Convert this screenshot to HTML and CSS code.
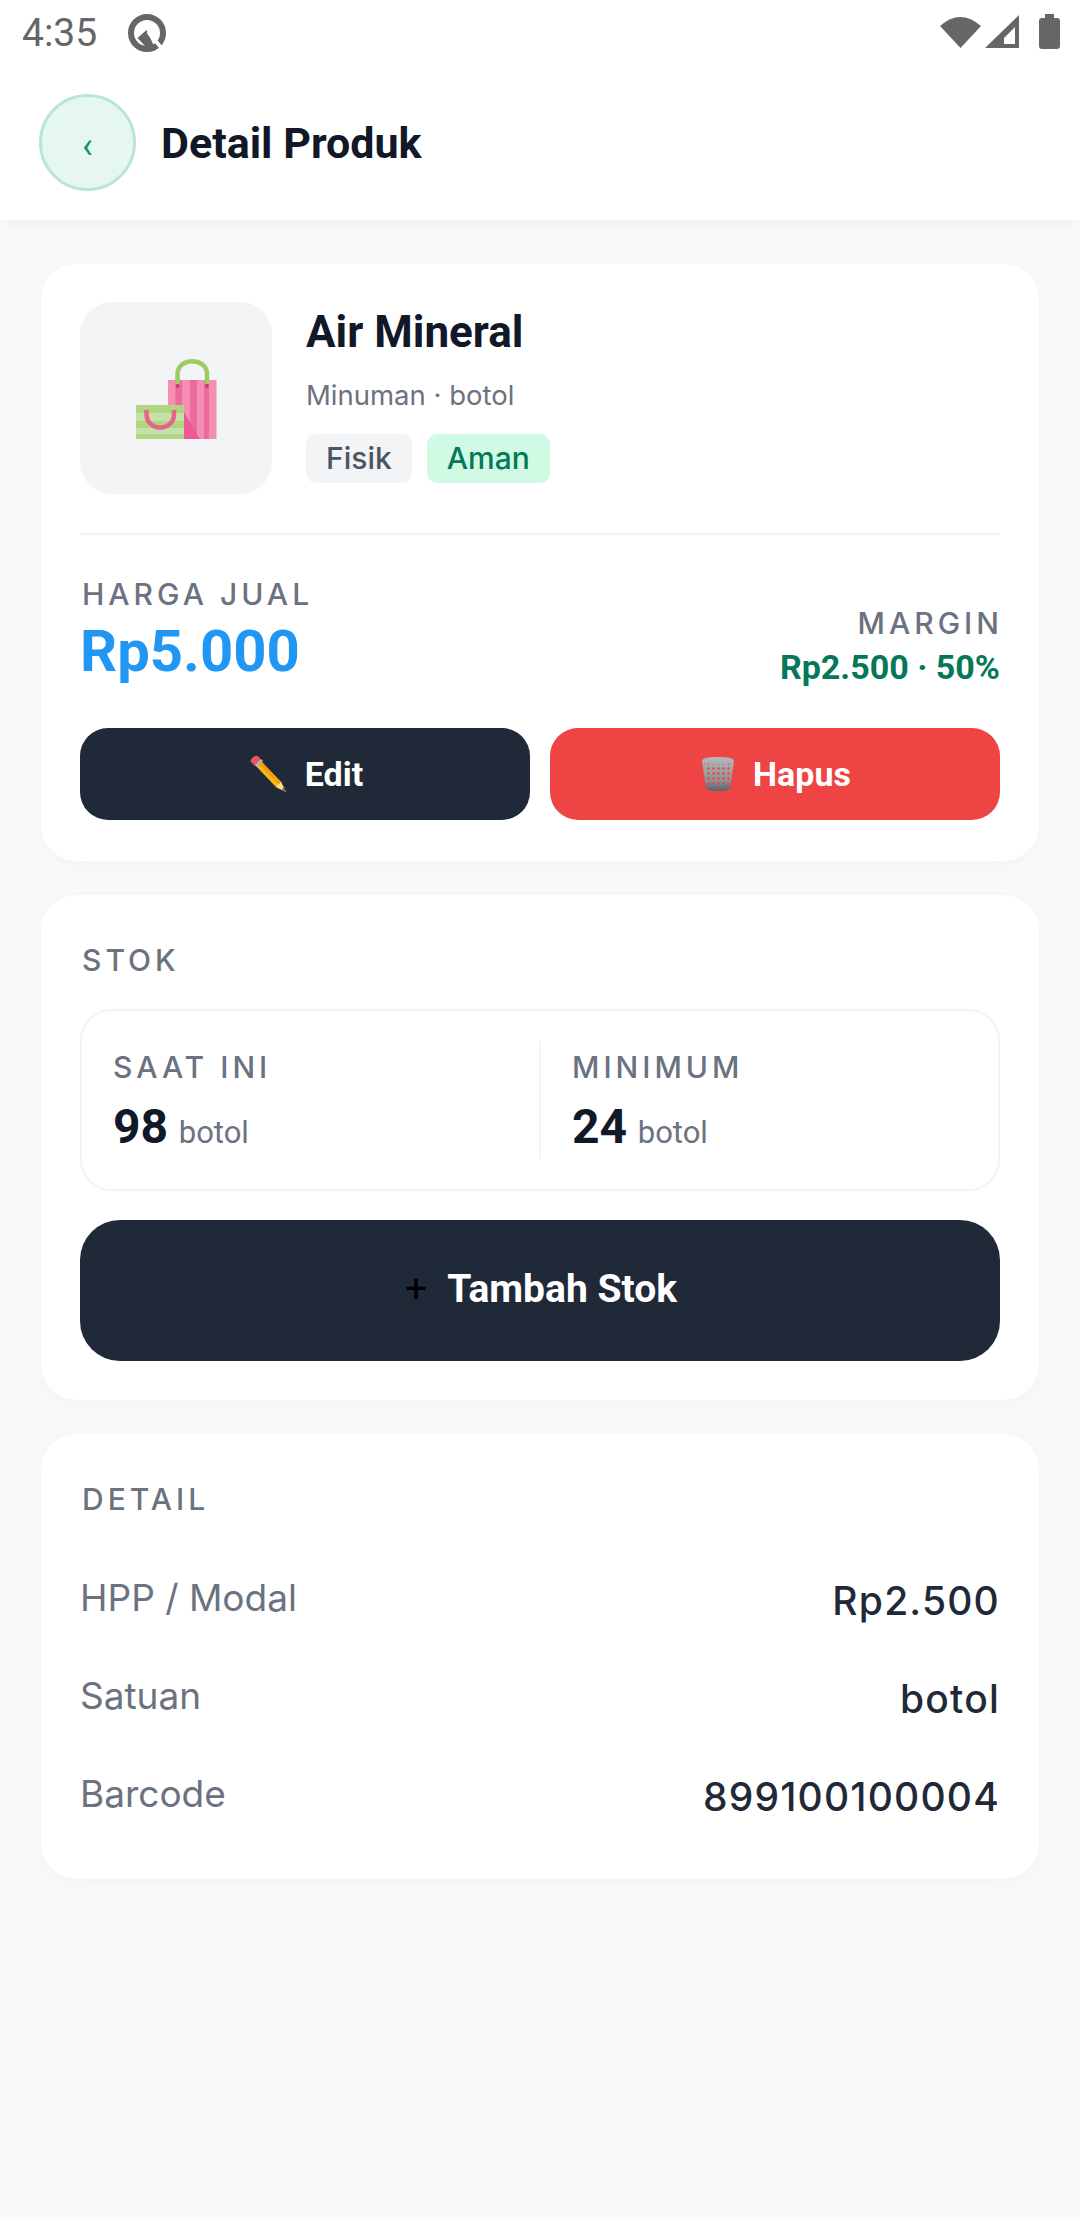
FILE: index.html
```html
<!DOCTYPE html>
<html lang="id">
<head>
    <meta charset="utf-8"/>
    <title>Detail Produk</title>
    <link rel="stylesheet" href="styles.css">
</head>
<body>
    <div class="statusbar">
        <span class="time">4:35</span>
        <svg class="status-q" width="40" height="40" viewBox="0 0 40 40">
            <circle cx="20" cy="20" r="16" fill="none" stroke="#666" stroke-width="6"/>
            <path d="M19.500 17 L10.500 25 L18 33 L27 33 Z" fill="#666"/>
            <path d="M21 19 L37 38" stroke="#fff" stroke-width="3.500"/>
        </svg>
        <span class="status-space"></span>
        <svg width="122" height="40" viewBox="0 0 122 40">
            <path d="M2 13 Q22 -5 43 13 L22.500 35 Z" fill="#666"/>
            <path d="M47 35 L81 2 V35 Z M66 31 H77 V14 L66 25 Z" fill="#666" fill-rule="evenodd"/>
            <path d="M107 1 H116 V5 H119 Q122 5 122 8 V33 Q122 36 119 36 H104 Q101 36 101 33 V8 Q101 5 104 5 H107 Z" fill="#666"/>
        </svg>
    </div>

    <header class="topbar">
        <a class="back">‹</a>
        <h1>Detail Produk</h1>
    </header>

    <main>
        <section class="card card-product">
            <div class="product">
                <div class="thumb">
                    <svg width="100" height="100" viewBox="0 0 100 100">
                        <rect x="42" y="32" width="48.500" height="59" fill="#f48fb1"/>
                        <rect x="49.500" y="32" width="6.500" height="59" fill="#ec6a9c"/>
                        <rect x="64" y="32" width="7" height="59" fill="#ec6a9c"/>
                        <rect x="78" y="32" width="5" height="59" fill="#ec6a9c"/>
                        <path d="M58 91 V64 L74 91 Z" fill="#ec5a92"/>
                        <path d="M51.500 36 V26 C51.500 9 81 9 81 26 V36" fill="none" stroke="#9ccc65" stroke-width="4.500"/>
                        <circle cx="51.500" cy="38" r="2" fill="#b0466e"/>
                        <circle cx="81" cy="38" r="2" fill="#b0466e"/>
                        <rect x="10" y="57" width="48" height="34" fill="#aed581"/>
                        <rect x="10" y="65" width="48" height="8" fill="#c5e1a5"/>
                        <rect x="10" y="80" width="48" height="6" fill="#c5e1a5"/>
                        <path d="M20.500 62 V66 C20.500 84 48 84 48 66 V62" fill="none" stroke="#e8628f" stroke-width="4.500"/>
                    </svg>
                </div>
                <div class="product-info">
                    <h2>Air Mineral</h2>
                    <p class="meta">Minuman · botol</p>
                    <div class="tags">
                        <span class="tag">Fisik</span>
                        <span class="tag tag-ok">Aman</span>
                    </div>
                </div>
            </div>
            <div class="prices">
                <div>
                    <div class="label">HARGA JUAL</div>
                    <div class="price">Rp5.000</div>
                </div>
                <div class="margin">
                    <div class="label">MARGIN</div>
                    <div class="margin-val">Rp2.500 · 50%</div>
                </div>
            </div>
            <div class="actions">
                <a class="btn btn-dark">
                    <svg width="38" height="38" viewBox="0 0 38 38">
                        <path d="M4 8 L9 3 L32 27 L37 37 L27 32 Z" fill="#fbb714"/>
                        <path d="M13 7 L33 28 L30 30 L10 9 Z" fill="#f59e0b"/>
                        <path d="M27 32 L32 27 L37 37 Z" fill="#fcdc87"/>
                        <path d="M33 35 L37 37 L35 32 Z" fill="#5a5f69"/>
                        <path d="M2 7 Q1 5 3 3 L6 1 Q8 0 10 2 L12 5 L6 11 Z" fill="#e9565a"/>
                        <path d="M6 10 L12 4 L14 6 L8 12 Z" fill="#b0b5ba"/>
                    </svg>
                    Edit
                </a>
                <a class="btn btn-red">
                    <svg width="34" height="36" viewBox="0 0 34 36">
                        <defs>
                            <linearGradient id="bin" x1="0" y1="0" x2="0" y2="1">
                                <stop offset="0" stop-color="#b5b9bd"/>
                                <stop offset="0.7" stop-color="#8b9298"/>
                                <stop offset="1" stop-color="#4d646e"/>
                            </linearGradient>
                            <pattern id="mesh" width="5" height="5" patternUnits="userSpaceOnUse">
                                <circle cx="2.500" cy="2.500" r="1.300" fill="#ef4444"/>
                            </pattern>
                        </defs>
                        <path d="M1 5 Q1 1 17 1 Q33 1 33 5 L29 32 Q28 35 17 35 Q6 35 5 32 Z" fill="url(#bin)"/>
                        <path d="M3 7 Q17 10 31 7 L28 31 Q17 34 6 31 Z" fill="url(#mesh)"/>
                    </svg>
                    Hapus
                </a>
            </div>
        </section>

        <section class="card card-stock">
            <div class="label section-title">STOK</div>
            <div class="stock">
                <div class="stock-col">
                    <div class="label">SAAT INI</div>
                    <div class="stock-val"><b>98</b> botol</div>
                </div>
                <div class="stock-col">
                    <div class="label">MINIMUM</div>
                    <div class="stock-val"><b>24</b> botol</div>
                </div>
            </div>
            <a class="btn btn-dark btn-big"><span class="plus">+</span> Tambah Stok</a>
        </section>

        <section class="card card-detail">
            <div class="label section-title">DETAIL</div>
            <div class="row"><span>HPP / Modal</span><b>Rp2.500</b></div>
            <div class="row"><span>Satuan</span><b>botol</b></div>
            <div class="row"><span>Barcode</span><b>899100100004</b></div>
        </section>
    </main>
</body>
</html>
```

FILE: styles.css
```css
* {
    box-sizing: border-box;
}

body {
    margin: 0;
    min-height: 2220px;
    background-color: #f9fafb;
    font-family: Inter, "Noto Sans", sans-serif;
    color: #111827;
}

.statusbar {
    position: relative;
    z-index: 1;
    display: flex;
    align-items: center;
    height: 66px;
    padding: 0 20px 0 22px;
    background-color: #fff;
}

.time {
    font-family: Roboto, sans-serif;
    font-size: 39px;
    color: #666;
}

.status-q {
    margin-left: 30px;
}

.status-space {
    flex: 1;
}

.topbar {
    display: flex;
    align-items: center;
    gap: 25px;
    height: 154px;
    padding: 0 0 2px 39px;
    background-color: #fff;
    box-shadow: 0 4px 16px rgba(0, 0, 0, 0.04);
}

.back {
    display: flex;
    align-items: center;
    justify-content: center;
    width: 97px;
    height: 97px;
    padding-top: 8px;
    border: 3px solid #b9e5d4;
    border-radius: 50%;
    background-color: #e6f6f0;
    color: #059669;
    font-family: Roboto, sans-serif;
    font-size: 36px;
}

h1 {
    margin: 0;
    padding-top: 2px;
    font-family: Roboto, sans-serif;
    font-size: 43px;
    font-weight: 700;
}

main {
    display: flex;
    flex-direction: column;
    gap: 34px;
    padding: 44px 41px;
}

.card {
    padding: 38px 39px;
    border-radius: 36px;
    background-color: #fff;
    box-shadow: 0 4px 20px rgba(0, 0, 0, 0.035);
}

.card-product {
    padding-bottom: 41px;
}

.card-stock {
    padding-bottom: 39px;
}

.card-detail {
    padding-bottom: 37px;
}

.product {
    display: flex;
    gap: 34px;
    padding-bottom: 39px;
    border-bottom: 2px solid #f3f4f6;
}

.thumb {
    display: flex;
    align-items: center;
    justify-content: center;
    width: 192px;
    height: 192px;
    flex-shrink: 0;
    border-radius: 32px;
    background-color: #f3f4f6;
}

h2 {
    margin: 0;
    padding-top: 1px;
    font-family: Roboto, sans-serif;
    font-size: 44px;
    line-height: 58px;
    font-weight: 700;
}

.meta {
    margin: 14px 0 19px;
    font-size: 27.5px;
    line-height: 40px;
    color: #6b7280;
}

.tags {
    display: flex;
    gap: 15px;
}

.tag {
    padding: 0 20px;
    height: 49px;
    line-height: 49px;
    border-radius: 10px;
    background-color: #f3f4f6;
    color: #4b5563;
    font-size: 30px;
    font-weight: 500;
}

.tag-ok {
    background-color: #d1fae5;
    color: #047857;
}

.label {
    font-size: 30px;
    line-height: 36px;
    font-weight: 500;
    letter-spacing: 4px;
    color: #6b7280;
}

.prices {
    display: flex;
    justify-content: space-between;
    align-items: flex-end;
    padding: 41px 0 0 2px;
    margin-bottom: 41px;
}

.price {
    margin: 3px 0 0 -2px;
    font-family: Roboto, sans-serif;
    font-size: 58px;
    line-height: 72px;
    font-weight: 700;
    color: #2196f3;
}

.margin {
    text-align: right;
}

.margin .label {
    margin-right: -3px;
}

.margin-val {
    margin-top: 6px;
    font-family: Roboto, sans-serif;
    font-size: 34px;
    line-height: 40px;
    font-weight: 700;
    color: #047857;
}

.actions {
    display: flex;
    gap: 20px;
}

.btn {
    flex: 1;
    display: flex;
    align-items: center;
    justify-content: center;
    gap: 18px;
    height: 92px;
    padding-left: 2px;
    border-radius: 28px;
    color: #fff;
    font-family: Roboto, sans-serif;
    font-size: 34px;
    font-weight: 700;
}

.btn-dark {
    background-color: #1f2937;
}

.btn-red {
    background-color: #ef4444;
}

.btn-big {
    height: 141px;
    margin-top: 29px;
    padding-bottom: 3px;
    border-radius: 40px;
    font-size: 39px;
    gap: 20px;
}

.plus {
    color: #000;
    font-weight: 400;
}

.section-title {
    padding-left: 2px;
    margin-top: 9px;
    margin-bottom: 31px;
}

.stock {
    display: flex;
    height: 182px;
    padding: 30px 0;
    border: 2px solid #f3f4f6;
    border-radius: 32px;
}

.stock-col {
    flex: 1;
    padding: 8px 0 0 31px;
}

.stock-col + .stock-col {
    border-left: 2px solid #f3f4f6;
}

.stock-val {
    margin-top: 13px;
    font-family: Roboto, sans-serif;
    font-size: 31px;
    color: #6b7280;
}

.stock-val b {
    margin-right: 3px;
    font-size: 48px;
    color: #111827;
}

.row {
    display: flex;
    justify-content: space-between;
    align-items: center;
    height: 98px;
    font-size: 37px;
    color: #6b7280;
}

.row b {
    padding-top: 6px;
    font-size: 39px;
    font-weight: 500;
    letter-spacing: 1.200px;
    color: #1f2937;
}
```
